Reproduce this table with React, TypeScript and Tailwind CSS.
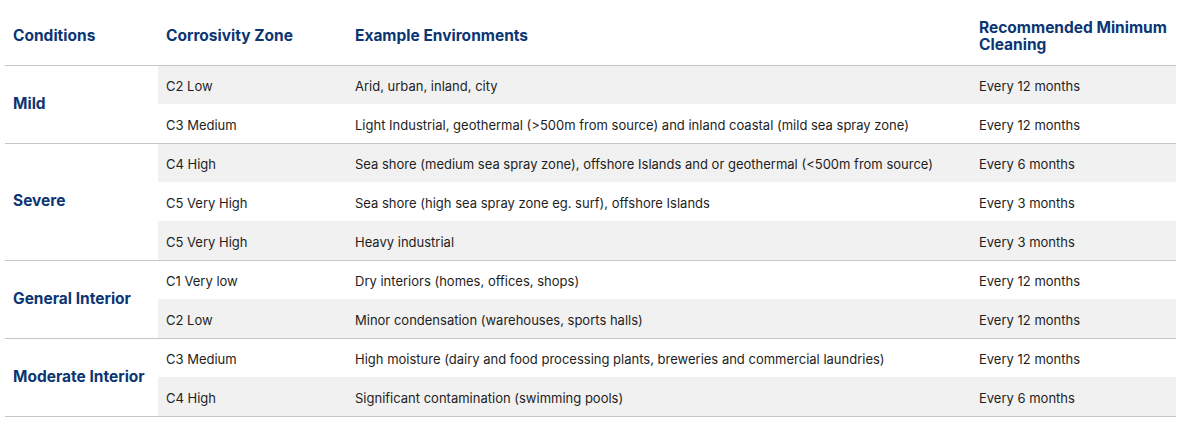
import React from 'react';

type Row = { zone: string; env: string; clean: string };
type Group = { label: string; rows: Row[] };

const groups: Group[] = [
  {
    label: 'Mild',
    rows: [
      { zone: 'C2 Low', env: 'Arid, urban, inland, city', clean: 'Every 12 months' },
      { zone: 'C3 Medium', env: 'Light Industrial, geothermal (>500m from source) and inland coastal (mild sea spray zone)', clean: 'Every 12 months' },
    ],
  },
  {
    label: 'Severe',
    rows: [
      { zone: 'C4 High', env: 'Sea shore (medium sea spray zone), offshore Islands and or geothermal (<500m from source)', clean: 'Every 6 months' },
      { zone: 'C5 Very High', env: 'Sea shore (high sea spray zone eg. surf), offshore Islands', clean: 'Every 3 months' },
      { zone: 'C5 Very High', env: 'Heavy industrial', clean: 'Every 3 months' },
    ],
  },
  {
    label: 'General Interior',
    rows: [
      { zone: 'C1 Very low', env: 'Dry interiors (homes, offices, shops)', clean: 'Every 12 months' },
      { zone: 'C2 Low', env: 'Minor condensation (warehouses, sports halls)', clean: 'Every 12 months' },
    ],
  },
  {
    label: 'Moderate Interior',
    rows: [
      { zone: 'C3 Medium', env: 'High moisture (dairy and food processing plants, breweries and commercial laundries)', clean: 'Every 12 months' },
      { zone: 'C4 High', env: 'Significant contamination (swimming pools)', clean: 'Every 6 months' },
    ],
  },
];

export default function App() {
  let idx = 0;
  return (
    <div className="bg-white w-[1180px] h-[426px] pl-[5px] font-['Inter',sans-serif]">
      <table className="w-[1171px] border-collapse table-fixed">
        <colgroup>
          <col className="w-[153px]" />
          <col className="w-[189px]" />
          <col className="w-[624px]" />
          <col className="w-[205px]" />
        </colgroup>
        <thead>
          <tr className="h-[65px] border-b border-[#c6c6c6] text-left align-middle text-[15.5px] leading-[17px] text-[#0c3673]">
            <th className="px-2 pt-[7px] font-bold">Conditions</th>
            <th className="px-2 pt-[7px] font-bold">Corrosivity Zone</th>
            <th className="px-2 pt-[7px] font-bold">Example Environments</th>
            <th className="px-2 pt-[7px] font-bold">Recommended Minimum Cleaning</th>
          </tr>
        </thead>
        <tbody>
          {groups.map((g) =>
            g.rows.map((r, i) => {
              const shaded = idx++ % 2 === 0;
              const last = i === g.rows.length - 1;
              const cell = `px-2 pt-[4px] ${shaded ? 'bg-[#f1f1f1]' : 'bg-white'}`;
              return (
                <tr
                  key={g.label + i}
                  className={`h-[39px] text-[13px] text-[#1e1e1e] ${last ? 'border-b border-[#c6c6c6]' : ''}`}
                >
                  {i === 0 && (
                    <td rowSpan={g.rows.length} className="bg-white px-2 pb-[1px] text-[15.5px] font-bold text-[#0c3673]">
                      {g.label}
                    </td>
                  )}
                  <td className={cell}>{r.zone}</td>
                  <td className={cell}>{r.env}</td>
                  <td className={cell}>{r.clean}</td>
                </tr>
              );
            })
          )}
        </tbody>
      </table>
    </div>
  );
}
